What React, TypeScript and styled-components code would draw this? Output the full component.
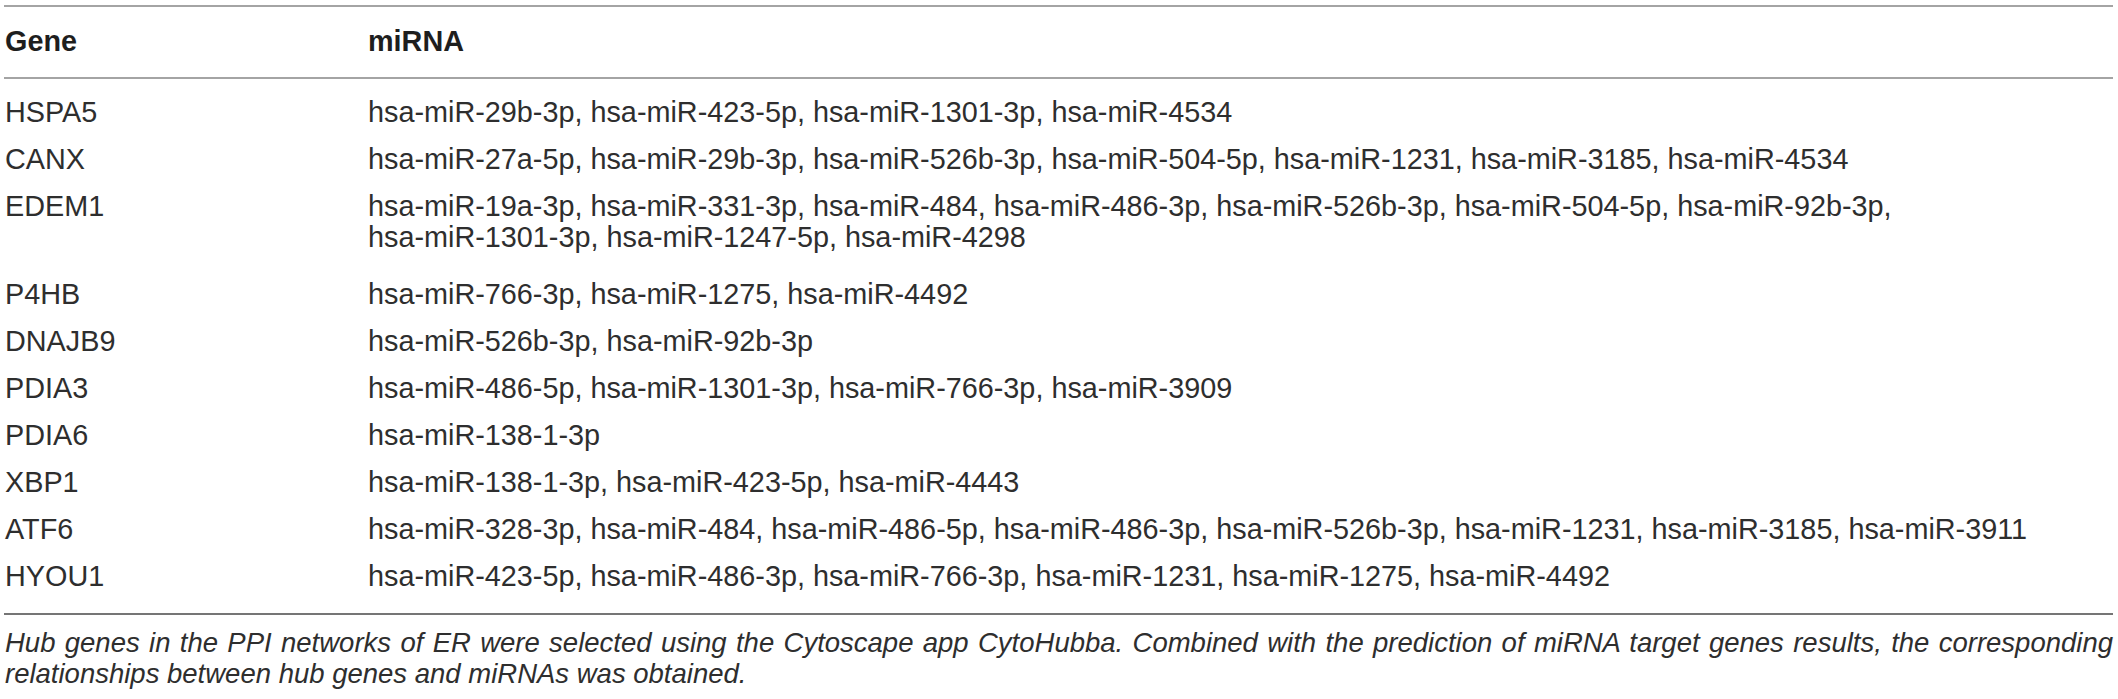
import React from "react";
import styled, { createGlobalStyle } from "styled-components";

const GlobalStyle = createGlobalStyle`
  html, body {
    margin: 0;
    padding: 0;
    background: #ffffff;
  }
  body {
    font-family: "Liberation Sans", Arial, Helvetica, sans-serif;
    color: #2e2e2e;
  }
`;

const Page = styled.div`
  width: 2118px;
  height: 699px;
  box-sizing: border-box;
  padding: 5px 5px 0 4px;
  overflow: hidden;
`;

const Table = styled.div`
  display: flex;
  flex-direction: column;
  border-top: 2px solid #a4a4a4;
`;

const Row = styled.div<{ $head?: boolean; $wrapped?: boolean }>`
  display: grid;
  grid-template-columns: 363px 1fr;
  padding: ${(p) => (p.$head ? "18.6px 0 20px" : p.$wrapped ? "8px 0 18px" : "8px 0")};
  border-bottom: ${(p) => (p.$head ? "2px solid #a4a4a4" : "none")};
  font-size: 28.8px;
  line-height: 31px;
  font-weight: ${(p) => (p.$head ? 700 : 400)};
  color: ${(p) => (p.$head ? "#1e1e1e" : "#2e2e2e")};
`;

const Body = styled.div`
  display: flex;
  flex-direction: column;
  padding: 10.6px 0 13px;
  border-bottom: 2px solid #757575;
`;

const Cell = styled.div`
  padding-left: 1px;
  white-space: nowrap;
`;

const Caption = styled.div`
  padding: 12px 0 0 1px;
  font-size: 27.5px;
  line-height: 31px;
  font-style: italic;
  color: #2e2e2e;
`;

const JustifiedLine = styled.span`
  display: block;
  text-align: justify;
  text-align-last: justify;
  white-space: nowrap;
`;

const Line = styled.span`
  display: block;
`;

type Entry = { gene: string; lines: string[] };

const rows: Entry[] = [
  { gene: "HSPA5", lines: ["hsa-miR-29b-3p, hsa-miR-423-5p, hsa-miR-1301-3p, hsa-miR-4534"] },
  {
    gene: "CANX",
    lines: [
      "hsa-miR-27a-5p, hsa-miR-29b-3p, hsa-miR-526b-3p, hsa-miR-504-5p, hsa-miR-1231, hsa-miR-3185, hsa-miR-4534",
    ],
  },
  {
    gene: "EDEM1",
    lines: [
      "hsa-miR-19a-3p, hsa-miR-331-3p, hsa-miR-484, hsa-miR-486-3p, hsa-miR-526b-3p, hsa-miR-504-5p, hsa-miR-92b-3p,",
      "hsa-miR-1301-3p, hsa-miR-1247-5p, hsa-miR-4298",
    ],
  },
  { gene: "P4HB", lines: ["hsa-miR-766-3p, hsa-miR-1275, hsa-miR-4492"] },
  { gene: "DNAJB9", lines: ["hsa-miR-526b-3p, hsa-miR-92b-3p"] },
  { gene: "PDIA3", lines: ["hsa-miR-486-5p, hsa-miR-1301-3p, hsa-miR-766-3p, hsa-miR-3909"] },
  { gene: "PDIA6", lines: ["hsa-miR-138-1-3p"] },
  { gene: "XBP1", lines: ["hsa-miR-138-1-3p, hsa-miR-423-5p, hsa-miR-4443"] },
  {
    gene: "ATF6",
    lines: [
      "hsa-miR-328-3p, hsa-miR-484, hsa-miR-486-5p, hsa-miR-486-3p, hsa-miR-526b-3p, hsa-miR-1231, hsa-miR-3185, hsa-miR-3911",
    ],
  },
  {
    gene: "HYOU1",
    lines: ["hsa-miR-423-5p, hsa-miR-486-3p, hsa-miR-766-3p, hsa-miR-1231, hsa-miR-1275, hsa-miR-4492"],
  },
];

export default function App() {
  return (
    <>
      <GlobalStyle />
      <Page>
        <Table>
          <Row $head>
            <Cell>Gene</Cell>
            <Cell>miRNA</Cell>
          </Row>
          <Body>
            {rows.map((r) => (
              <Row key={r.gene} $wrapped={r.lines.length > 1}>
                <Cell>{r.gene}</Cell>
                <Cell>
                  {r.lines.map((l, i) => (
                    <Line key={i}>{l}</Line>
                  ))}
                </Cell>
              </Row>
            ))}
          </Body>
        </Table>
        <Caption>
          <JustifiedLine>
            Hub genes in the PPI networks of ER were selected using the Cytoscape app CytoHubba. Combined with the
            prediction of miRNA target genes results, the corresponding
          </JustifiedLine>
          <Line>relationships between hub genes and miRNAs was obtained.</Line>
        </Caption>
      </Page>
    </>
  );
}
